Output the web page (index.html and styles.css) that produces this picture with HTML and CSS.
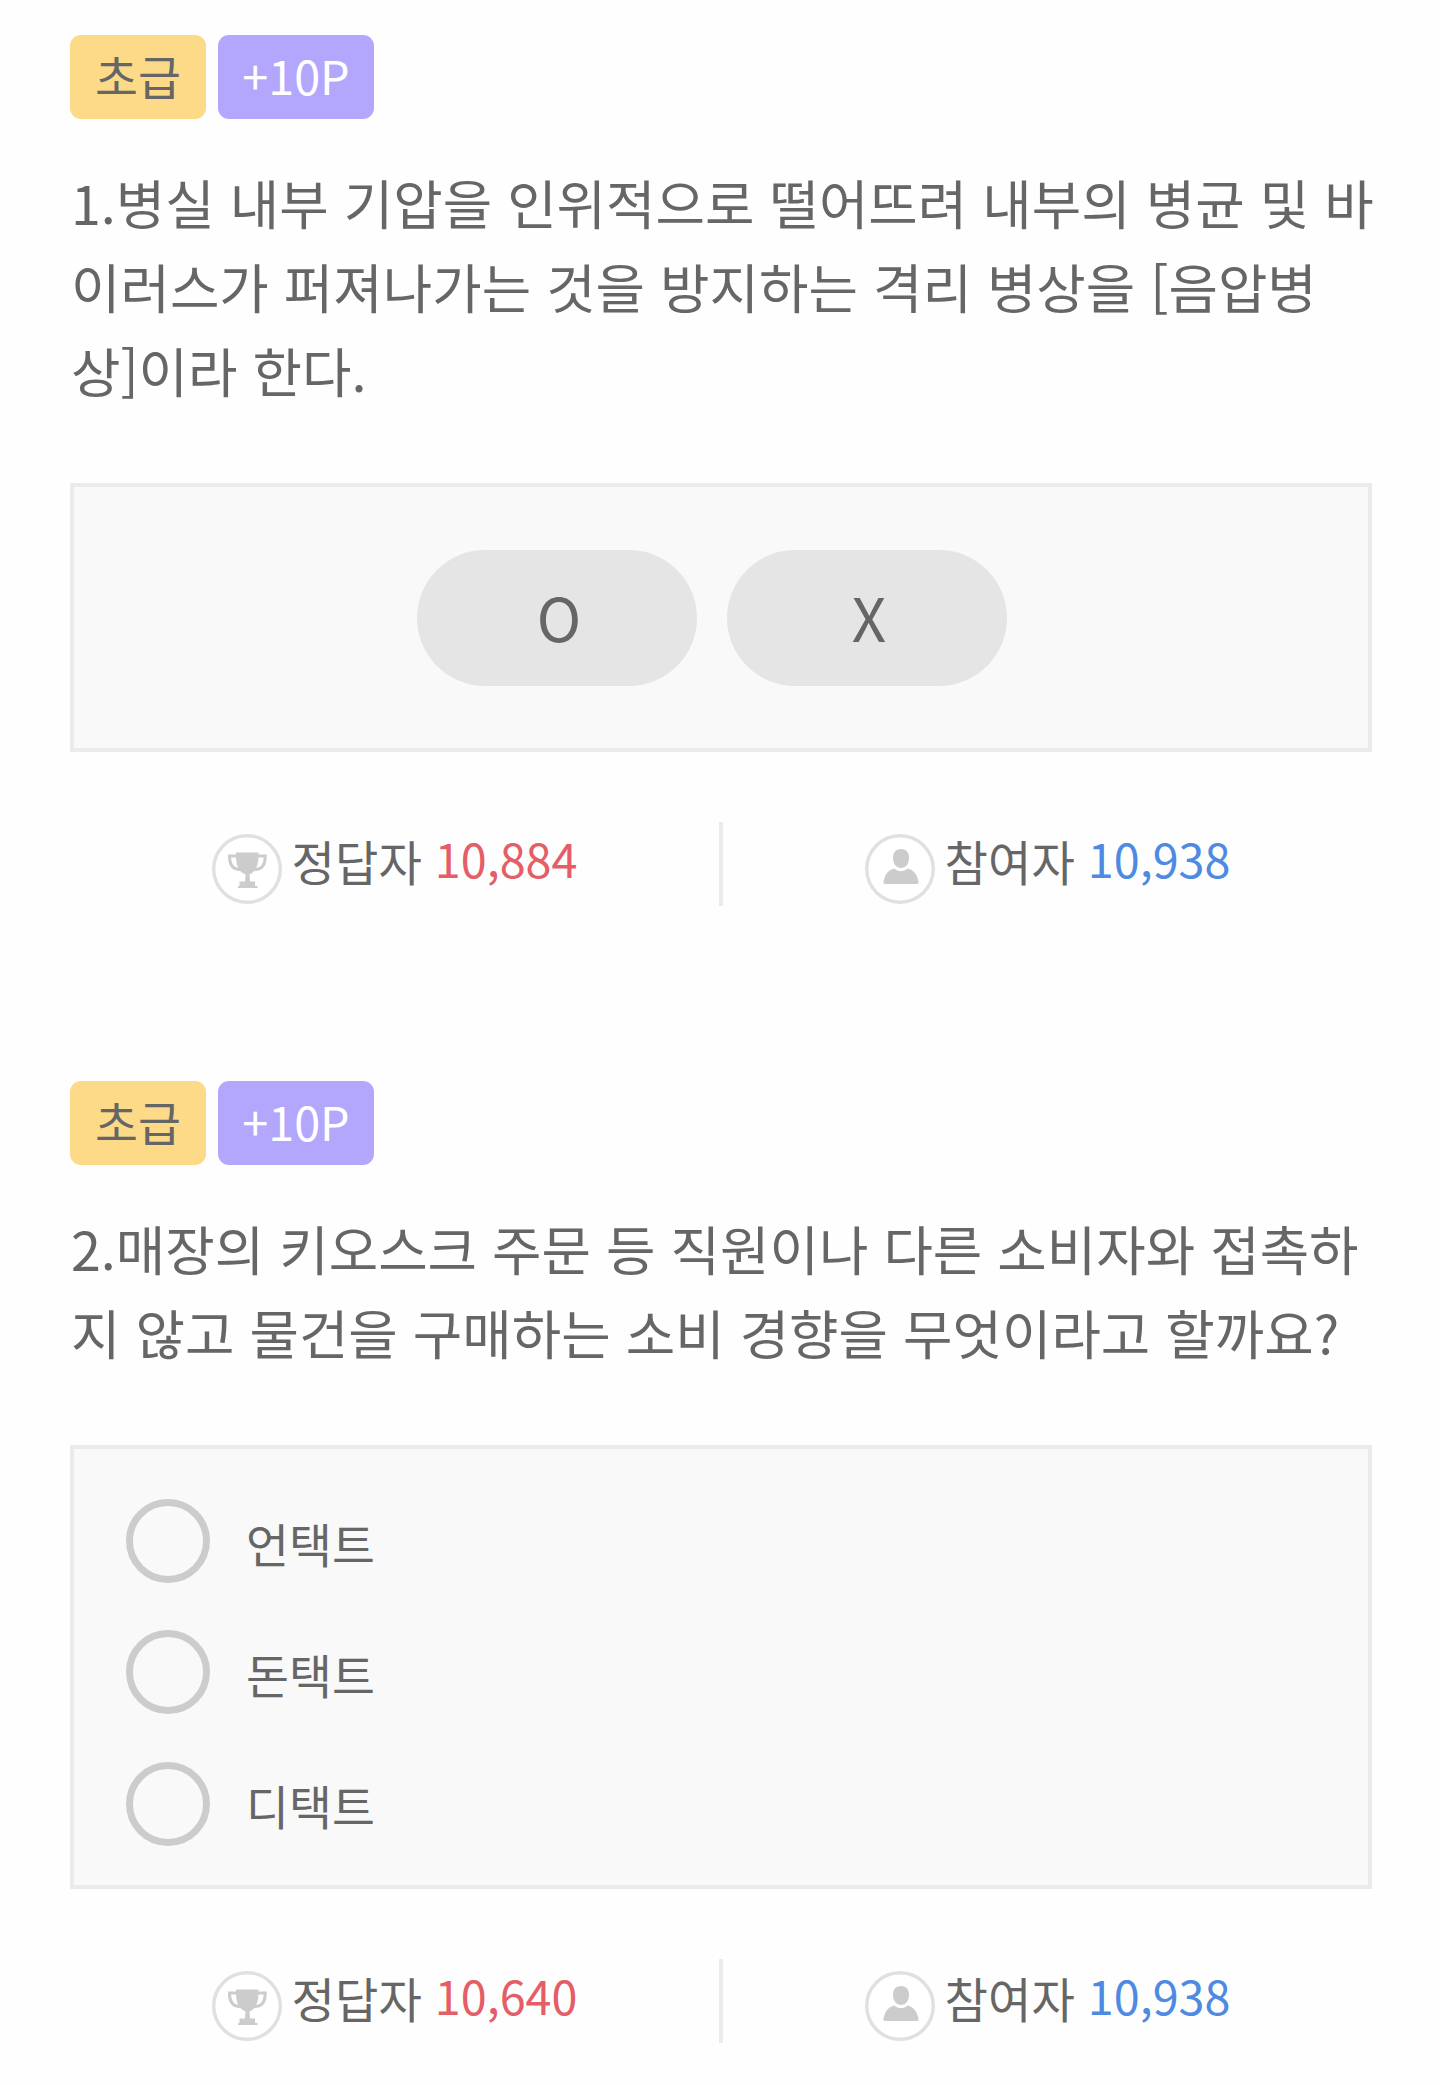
FILE: index.html
```html
<!DOCTYPE html>
<html lang="ko">
<head>
<meta charset="utf-8">
<title>Quiz</title>
<link rel="stylesheet" href="styles.css">
</head>
<body>
<svg class="sprite" aria-hidden="true">
  <symbol id="trophy" viewBox="0 0 70 70">
    <circle cx="35" cy="35" r="33.3" fill="#fff" stroke="#e0e0e0" stroke-width="3.4"/>
    <path d="M24.5 22H17.5C17.5 30 20 35.5 28 35.5M45.500 22H53.200C53.200 30 50.500 35.500 43 35.500" fill="none" stroke="#ccc" stroke-width="3"/>
    <path d="M24 18.500H46.500V22C46.500 31 44 38 37.500 40.500L38 47.500H43V52H45.500V54H26V52H27.500V47.500H33L33.500 40.500C26.500 38 24 31 24 22Z" fill="#ccc"/>
  </symbol>
  <symbol id="person" viewBox="0 0 70 70">
    <circle cx="35" cy="35" r="33.3" fill="#fff" stroke="#e0e0e0" stroke-width="3.4"/>
    <path d="M29.500 34.500C33 38 39 38 42.500 34.500C49.500 36.500 51.500 40 53.500 47.500Q54 50 51.500 50H20.500Q18 50 18.500 47.500C20.500 40 22.500 36.500 29.500 34.500Z" fill="#ccc"/>
    <path d="M36 15C41.500 15 44 18.500 44 24C44 30 40.500 34 36 34S28 30 28 24C28 18.500 30.500 15 36 15Z" fill="#ccc" stroke="#fff" stroke-width="3" paint-order="stroke"/>
  </symbol>
</svg>
<main class="quiz">
  <section class="question">
    <div class="badges"><span class="badge level">초급</span><span class="badge point">+10P</span></div>
    <p class="text">1.병실 내부 기압을 인위적으로 떨어뜨려 내부의 병균 및 바<br>이러스가 퍼져나가는 것을 방지하는 격리 병상을 [음압병<br>상]이라 한다.</p>
    <div class="answers ox">
      <button class="pill">O</button>
      <button class="pill">X</button>
    </div>
    <div class="stats">
      <div class="stat correct"><svg class="icon"><use href="#trophy"/></svg><span class="label">정답자</span><span class="count">10,884</span></div>
      <div class="stat joined"><svg class="icon"><use href="#person"/></svg><span class="label">참여자</span><span class="count">10,938</span></div>
    </div>
  </section>
  <section class="question">
    <div class="badges"><span class="badge level">초급</span><span class="badge point">+10P</span></div>
    <p class="text">2.매장의 키오스크 주문 등 직원이나 다른 소비자와 접촉하<br>지 않고 물건을 구매하는 소비 경향을 무엇이라고 할까요?</p>
    <div class="answers choices">
      <label class="choice"><span class="radio"></span>언택트</label>
      <label class="choice"><span class="radio"></span>돈택트</label>
      <label class="choice"><span class="radio"></span>디택트</label>
    </div>
    <div class="stats">
      <div class="stat correct"><svg class="icon"><use href="#trophy"/></svg><span class="label">정답자</span><span class="count">10,640</span></div>
      <div class="stat joined"><svg class="icon"><use href="#person"/></svg><span class="label">참여자</span><span class="count">10,938</span></div>
    </div>
  </section>
</main>
</body>
</html>
```
FILE: styles.css
```css
* { box-sizing: border-box; }
body {
  margin: 0;
  background: #fefefe;
  color: #666;
  font-family: "Noto Sans CJK KR", sans-serif;
  font-size: 46.7px;
}
.sprite { display: none; }
.quiz {
  display: flex;
  flex-direction: column;
  gap: 175px;
  padding: 35px 68px 42px 70px;
}
.badges { display: flex; gap: 12px; }
.badge {
  height: 84px;
  padding-bottom: 4px;
  border-radius: 11px;
  line-height: 80px;
  text-align: center;
  white-space: nowrap;
}
.level { width: 136px; background: #fdda87; }
.point { width: 156px; background: #b3a6fd; color: #fff; }
.text {
  margin: 41px 0 71px;
  padding-left: 1px;
  font-size: 53.75px;
  line-height: 84px;
  white-space: nowrap;
}
.answers {
  border: 4px solid #ebebeb;
  background: #f9f9f9;
}
.ox {
  display: flex;
  gap: 30px;
  height: 269px;
  padding: 63px 0 0 343px;
}
.pill {
  width: 280px;
  height: 136px;
  padding: 0 0 4px 4px;
  border: 0;
  border-radius: 68px;
  background: #e5e5e5;
  color: #666;
  font: 60px/1 "Noto Sans CJK KR", sans-serif;
}
.choices {
  display: flex;
  flex-direction: column;
  gap: 47.4px;
  height: 444px;
  padding: 50px 0 0 52px;
}
.choice {
  display: flex;
  align-items: center;
  gap: 36px;
  height: 84px;
  line-height: 84px;
  padding-top: 3px;
}
.radio {
  width: 84px;
  height: 84px;
  margin-top: -3px;
  border: 7px solid #ccc;
  border-radius: 50%;
}
.stats {
  display: grid;
  grid-template-columns: 653px 1fr;
  height: 84px;
  margin-top: 70px;
}
.stat {
  display: flex;
  justify-content: center;
  line-height: 77px;
}
.correct { border-right: 4px solid #ebebeb; }
.icon {
  flex: none;
  width: 70px;
  height: 70px;
  margin: 12px 10px 0 0;
}
.label { margin-right: 13px; font-size: 47.2px; }
.count { line-height: 71px; }
.correct .count { color: #e55d67; }
.joined .count { color: #4e8ae2; }
```
